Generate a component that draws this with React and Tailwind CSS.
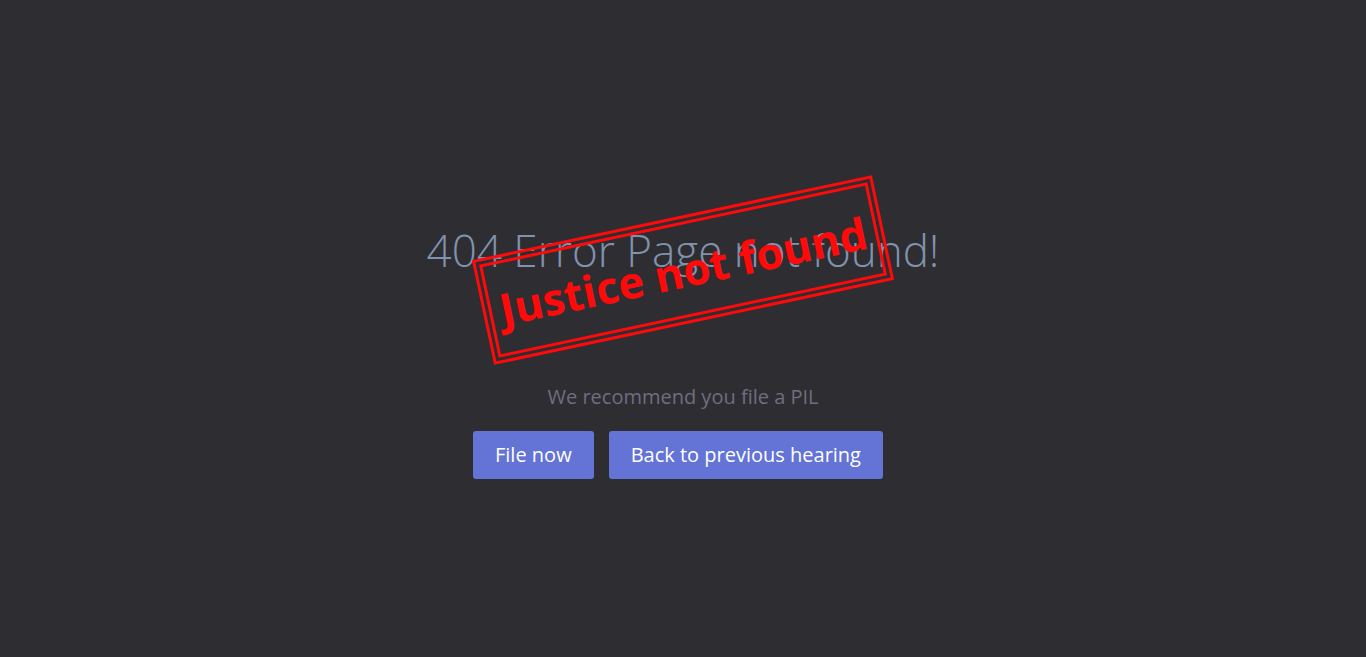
export default function App() {
  return (
    <div
      className="min-h-[657px] w-full bg-[#2e2d32] flex flex-col items-center pt-[220px]"
      style={{ fontFamily: '"Open Sans", sans-serif' }}
    >
      <div className="relative">
        <h1 className="text-[44px] leading-[60px] font-light text-[#8192ae] tracking-normal">
          404 Error Page not found!
        </h1>
        <div className="absolute left-1/2 top-[50px] -translate-x-1/2 -translate-y-1/2 -rotate-12">
          <div className="border-[3px] border-[#ff0a0a] p-[3px]">
            <div className="border-[3px] border-[#ff0a0a] w-[397px] h-[95px] flex items-center justify-center">
              <span className="text-[44px] font-bold text-[#ff0a0a] leading-none whitespace-nowrap">
                Justice not found
              </span>
            </div>
          </div>
        </div>
      </div>
      <p className="mt-[104px] text-[20px] leading-[26px] text-[#6f6e7f]">We recommend you file a PIL</p>
      <div className="mt-[21px] flex gap-[15px] pr-[10px]">
        <button className="h-[48px] px-[22px] rounded-[3px] bg-[#6373d6] text-white text-[20px]">File now</button>
        <button className="h-[48px] px-[22px] rounded-[3px] bg-[#6373d6] text-white text-[20px]">Back to previous hearing</button>
      </div>
    </div>
  );
}
